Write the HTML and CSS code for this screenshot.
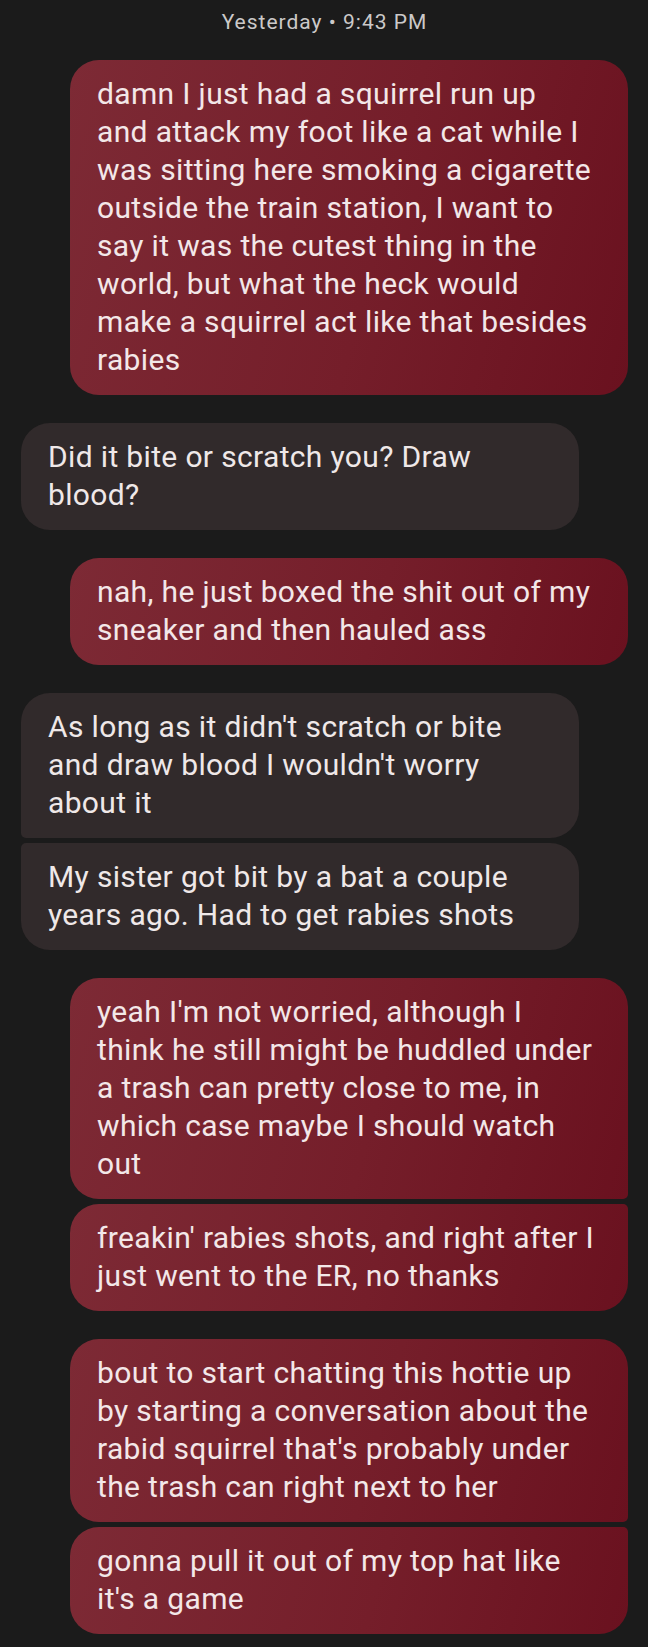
FILE: index.html
```html
<!DOCTYPE html>
<html lang="en">
<head>
<meta charset="utf-8">
<title>Messages</title>
<link rel="stylesheet" href="styles.css">
</head>
<body>
<main class="thread">
  <div class="stamp">Yesterday • 9:43 PM</div>

  <div class="group out">
    <div class="bubble">damn I just had a squirrel run up<br>and attack my foot like a cat while I<br>was sitting here smoking a cigarette<br>outside the train station, I want to<br>say it was the cutest thing in the<br>world, but what the heck would<br>make a squirrel act like that besides<br>rabies</div>
  </div>

  <div class="group in">
    <div class="bubble">Did it bite or scratch you? Draw<br>blood?</div>
  </div>

  <div class="group out">
    <div class="bubble">nah, he just boxed the shit out of my<br>sneaker and then hauled ass</div>
  </div>

  <div class="group in">
    <div class="bubble">As long as it didn't scratch or bite<br>and draw blood I wouldn't worry<br>about it</div>
    <div class="bubble">My sister got bit by a bat a couple<br>years ago. Had to get rabies shots</div>
  </div>

  <div class="group out">
    <div class="bubble">yeah I'm not worried, although I<br>think he still might be huddled under<br>a trash can pretty close to me, in<br>which case maybe I should watch<br>out</div>
    <div class="bubble">freakin' rabies shots, and right after I<br>just went to the ER, no thanks</div>
  </div>

  <div class="group out">
    <div class="bubble">bout to start chatting this hottie up<br>by starting a conversation about the<br>rabid squirrel that's probably under<br>the trash can right next to her</div>
    <div class="bubble">gonna pull it out of my top hat like<br>it's a game</div>
  </div>
</main>
</body>
</html>
```

FILE: styles.css
```css
html, body {
  margin: 0;
  padding: 0;
  background: #1b1b1b;
}

body {
  font-family: Roboto, "Noto Sans", "Liberation Sans", sans-serif;
  -webkit-font-smoothing: antialiased;
}

.thread {
  display: flex;
  flex-direction: column;
  gap: 28px;
  padding: 9px 20px 14px 21px;
}

.stamp {
  text-align: center;
  color: #cbc9c9;
  font-size: 21px;
  letter-spacing: 1px;
  line-height: 26px;
  margin-bottom: -3px;
}

.group {
  display: flex;
  flex-direction: column;
  gap: 5px;
}

.group.out {
  align-items: flex-end;
}

.group.in {
  align-items: flex-start;
}

.bubble {
  box-sizing: border-box;
  width: 558px;
  padding: 15px 20px 16px 27px;
  font-size: 30px;
  letter-spacing: 0.35px;
  line-height: 38px;
  white-space: nowrap;
  border-radius: 29px;
}

.out .bubble {
  background: linear-gradient(105deg, #7d2a35 0%, #751e2a 55%, #6a111f 100%);
  color: #f3e7e8;
}

.in .bubble {
  background: #312a2b;
  color: #efe8e8;
}

.out .bubble:not(:last-child) {
  border-bottom-right-radius: 5px;
}

.out .bubble:not(:first-child) {
  border-top-right-radius: 5px;
}

.in .bubble:not(:last-child) {
  border-bottom-left-radius: 5px;
}

.in .bubble:not(:first-child) {
  border-top-left-radius: 5px;
}
```
